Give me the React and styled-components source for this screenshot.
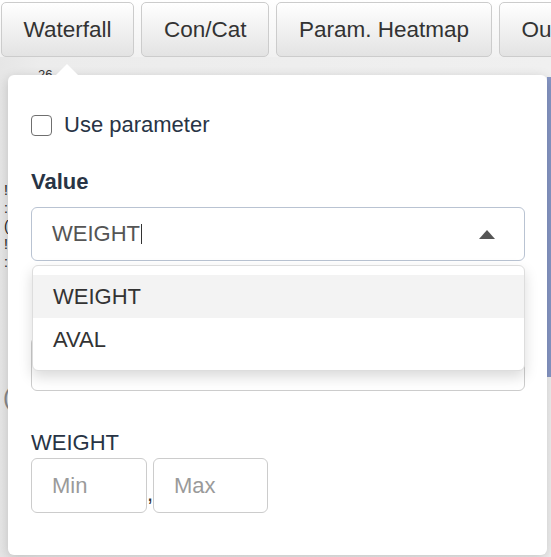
import React from 'react'
import styled, {createGlobalStyle} from 'styled-components'

const GlobalStyle = createGlobalStyle`
	html, body {
		margin: 0;
		padding: 0;
		background: #ffffff;
		font-family: "Liberation Sans", Arial, sans-serif;
	}
	* { box-sizing: border-box; }
`

const Page = styled.div`
	width: 551px;
	height: 557px;
	overflow: hidden;
	display: flex;
	flex-direction: column;
	background: #ffffff;
`

const Toolbar = styled.div`
	display: flex;
	flex-direction: row;
	gap: 7.5px;
	height: 57px;
	padding: 2px 0 0 1px;
	flex-shrink: 0;
	background: linear-gradient(#ffffff, #f1f1f1);
`

const TabButton = styled.button`
	flex-shrink: 0;
	height: 55px;
	padding: 0 21.5px;
	border: 1px solid #cccccc;
	border-radius: 5px;
	background: linear-gradient(#ffffff, #e3e3e3);
	color: #333333;
	font-family: "Liberation Sans", Arial, sans-serif;
	font-size: 22.5px;
	white-space: nowrap;
`

const Stage = styled.div`
	position: relative;
	flex: 1;
	display: flex;
	justify-content: space-between;
	background: linear-gradient(90deg, #e6e6e6 0px, #ececec 40px, #f0f0f0 100%);
`

const Scraps = styled.div`
	display: flex;
	flex-direction: column;
	padding-top: 12px;
	width: 60px;
`

const Num = styled.span`
	margin-left: 38px;
	font-size: 13px;
	line-height: 12px;
	color: #333333;
`

const SideGlyphs = styled.div`
	display: flex;
	flex-direction: column;
	margin: 100px 0 0 4px;
	font-size: 14px;
	line-height: 18px;
	color: #222222;
`

const Paren = styled.span`
	margin: 112px 0 0 3px;
	font-size: 24px;
	color: #888888;
`

const Stripe = styled.div`
	width: 4px;
	height: 300px;
	margin-top: 20px;
	background: #8797c6;
`

const Popover = styled.div`
	position: absolute;
	left: 8px;
	top: 18px;
	width: 539px;
	height: 480px;
	background: #ffffff;
	border-radius: 6px;
	box-shadow: 0 3px 12px rgba(0, 0, 0, 0.18);
	padding: 35px 22px 0 23px;
	display: flex;
	flex-direction: column;
	color: #283445;
	z-index: 1;

	&::before {
		content: '';
		position: absolute;
		left: 48px;
		top: -11px;
		border-left: 11px solid transparent;
		border-right: 11px solid transparent;
		border-bottom: 11px solid #ffffff;
	}
`

const CheckRow = styled.label`
	display: flex;
	align-items: center;
	gap: 12px;
	height: 30px;
	font-size: 22px;
`

const CheckBox = styled.span`
	width: 21px;
	height: 21px;
	border: 1.5px solid #6f6f6f;
	border-radius: 4px;
	background: #ffffff;
`

const FieldLabel = styled.div`
	font-size: 22px;
	line-height: 30px;
	font-weight: ${p => (p.$bold ? 700 : 400)};
	margin-top: ${p => p.$top}px;
`

const SelectWrap = styled.div`
	position: relative;
	margin-top: ${p => p.$top}px;
`

const SelectBox = styled.div`
	display: flex;
	align-items: center;
	justify-content: space-between;
	height: 54px;
	padding: 0 29px 0 20px;
	border: 1px solid ${p => (p.$focus ? '#b9c3d2' : '#cccccc')};
	border-radius: 6px;
	background: #ffffff;
	font-size: 22px;
	color: #555555;
`

const Caret = styled.span`
	display: inline-block;
	width: 1px;
	height: 20px;
	margin-left: 1px;
	vertical-align: -3px;
	background: #333333;
`

const Menu = styled.div`
	position: absolute;
	top: calc(100% + 4px);
	left: 1px;
	right: 0;
	padding: 9px 0;
	background: #ffffff;
	border: 1px solid #dddddd;
	border-radius: 6px;
	box-shadow: 0 6px 14px rgba(0, 0, 0, 0.15);
	z-index: 2;
`

const Option = styled.div`
	height: 43px;
	display: flex;
	align-items: center;
	padding-left: 20px;
	font-size: 22px;
	color: #333333;
	background: ${p => (p.$active ? '#f3f3f3' : '#ffffff')};
`

const RangeRow = styled.div`
	display: flex;
	align-items: flex-end;
	margin-top: 0;
	font-size: 22px;
	color: #333333;
`

const RangeInput = styled.div`
	width: ${p => p.$w}px;
	height: 55px;
	display: flex;
	align-items: center;
	padding-left: 20px;
	border: 1px solid #cccccc;
	border-radius: 6px;
	color: #9a9a9a;
	font-size: 22px;
`

const Comma = styled.span`
	width: 6px;
	line-height: 22px;
	margin-bottom: 8px;
`

const UpArrow = () => (
	<svg width="16" height="9" viewBox="0 0 16 9">
		<path d="M8 0 L16 9 L0 9 Z" fill="#555555" />
	</svg>
)

const App = () => (
	<Page>
		<GlobalStyle />
		<Toolbar>
			<TabButton>Waterfall</TabButton>
			<TabButton>Con/Cat</TabButton>
			<TabButton>Param. Heatmap</TabButton>
			<TabButton>Outliers</TabButton>
		</Toolbar>
		<Stage>
			<Scraps>
				<Num>26</Num>
				<SideGlyphs>
					<span>!</span>
					<span>:</span>
					<span>(</span>
					<span>!</span>
					<span>:</span>
				</SideGlyphs>
				<Paren>(</Paren>
			</Scraps>
			<Stripe />
			<Popover>
				<CheckRow>
					<CheckBox />
					Use parameter
				</CheckRow>
				<FieldLabel $bold $top={27}>Value</FieldLabel>
				<SelectWrap $top={10}>
					<SelectBox $focus>
						<span>WEIGHT<Caret /></span>
						<UpArrow />
					</SelectBox>
					<Menu>
						<Option $active>WEIGHT</Option>
						<Option>AVAL</Option>
					</Menu>
				</SelectWrap>
				<SelectWrap $top={76}>
					<SelectBox>
						<span>SUBJID</span>
					</SelectBox>
				</SelectWrap>
				<FieldLabel $top={37}>WEIGHT</FieldLabel>
				<RangeRow>
					<RangeInput $w={116}>Min</RangeInput>
					<Comma>,</Comma>
					<RangeInput $w={115}>Max</RangeInput>
				</RangeRow>
			</Popover>
		</Stage>
	</Page>
)

export default App
